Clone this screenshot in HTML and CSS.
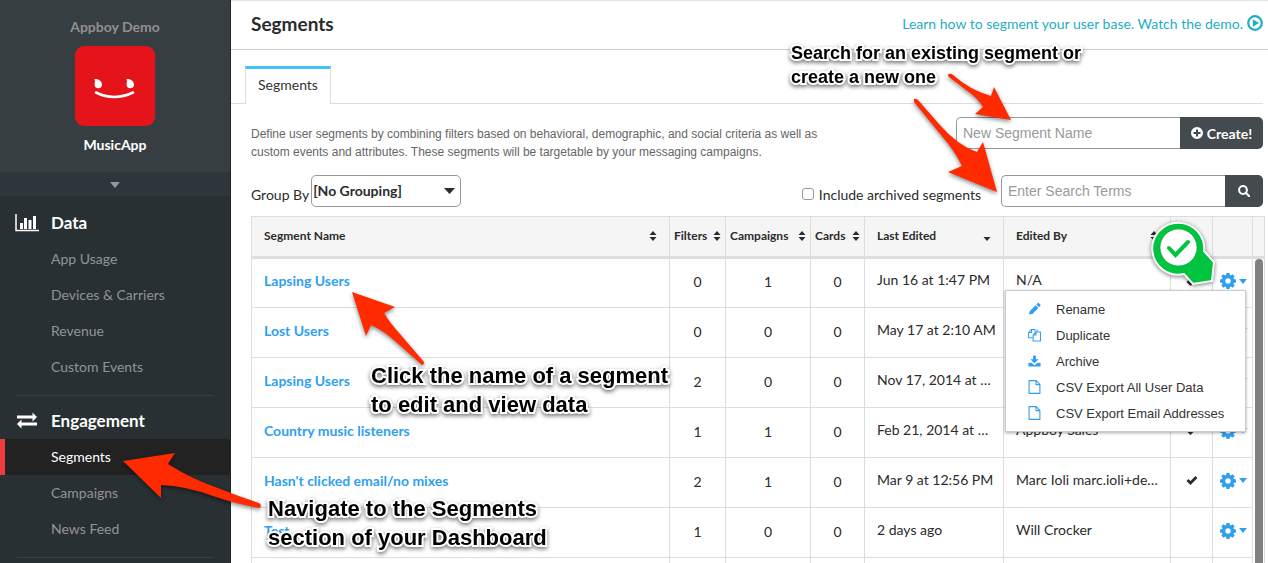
FILE: index.html
```html
<!DOCTYPE html>
<html lang="en">
<head>
<meta charset="utf-8">
<title>Segments</title>
<link rel="stylesheet" href="styles.css">
</head>
<body>
<svg class="defs" aria-hidden="true">
  <symbol id="gear" viewBox="0 0 16 16"><path fill-rule="evenodd" d="M6.500 0h3l.4 2 .9.400 1.800-1.200 2.100 2.100-1.200 1.800.4.900 2.100.4v3.100l-2.100.4-.4.900 1.200 1.800-2.100 2.100-1.800-1.200-.9.400-.4 2.100h-3l-.4-2.100-.9-.4-1.800 1.200-2.100-2.100 1.200-1.800-.4-.9L0 9.500V6.400L2.100 6l.4-.9-1.200-1.800 2.100-2.100 1.800 1.200.9-.4zM8 5.300a2.700 2.700 0 1 0 0 5.400 2.700 2.700 0 0 0 0-5.400z"/></symbol>
  <symbol id="caret" viewBox="0 0 8 5"><path d="M0 0h8L4 5z"/></symbol>
  <symbol id="sort" viewBox="0 0 8 10"><path d="M4 0l3.500 4h-7zM4 10l3.500-4h-7z"/></symbol>
  <symbol id="tick" viewBox="0 0 12 10"><path d="M1.500 5l3 3 6-6" fill="none" stroke="currentColor" stroke-width="2.800"/></symbol>
  <symbol id="file" viewBox="0 0 12 14"><path d="M.6.600h7l3.800 3.800v9H.6zM7.500.600v4h4" fill="none" stroke="currentColor" stroke-width="1.100"/></symbol>
</svg>
<div class="app">
  <aside class="sidebar">
    <div class="account">
      <span class="company">Appboy Demo</span>
      <svg class="logo" viewBox="0 0 80 80" aria-hidden="true">
        <rect width="80" height="80" rx="9" fill="#e5141b"/>
        <path d="M19.500 33c4-.5 7.500 2 7.500 5.500a3.700 3.800 0 0 1-7.400 0c0-2 .9-3-.1-5.500zM51.500 33c4-.5 7.500 2 7.500 5.500a3.700 3.800 0 0 1-7.400 0c0-2 .9-3-.1-5.500z" fill="#fff"/>
        <path d="M21 46.500q18 9 37 0" fill="none" stroke="#fff" stroke-width="2.600" stroke-linecap="round"/>
      </svg>
      <span class="app-name">MusicApp</span>
    </div>
    <button class="switcher" aria-label="Switch app"><svg viewBox="0 0 10 6"><path d="M0 0h10L5 6z"/></svg></button>
    <nav>
      <section class="group">
        <h2><svg class="group-icon" viewBox="0 0 24 18"><path d="M1 0v16.500h23" fill="none" stroke="#fff" stroke-width="1.500"/><path d="M5 9h3v6H5zM9 4h3v11H9zM13.500 6h3v9h-3zM18 2h3v13h-3z" fill="#fff"/></svg>Data</h2>
        <a href="#">App Usage</a>
        <a href="#">Devices &amp; Carriers</a>
        <a href="#">Revenue</a>
        <a href="#">Custom Events</a>
      </section>
      <section class="group">
        <h2><svg class="group-icon" viewBox="0 0 24 18"><path d="M2 5h16M6 12h16" stroke="#fff" stroke-width="2.800"/><path d="M17.500 .5L22 5l-4.500 4.500zM6.500 7.500L2 12l4.500 4.500z" fill="#fff"/></svg>Engagement</h2>
        <a href="#" class="active">Segments</a>
        <a href="#">Campaigns</a>
        <a href="#">News Feed</a>
      </section>
      <section class="group"></section>
    </nav>
  </aside>

  <main class="main">
    <header class="page-head">
      <h1>Segments</h1>
      <a class="demo" href="#">Learn how to segment your user base. Watch the demo.
        <svg viewBox="0 0 16 16"><circle cx="8" cy="8" r="6.800" fill="none" stroke="currentColor" stroke-width="2.200"/><path d="M5.800 4.200v7.600L12 8z" fill="currentColor"/></svg></a>
    </header>
    <div class="tabs"><a class="tab" href="#">Segments</a></div>

    <div class="content">
      <div class="intro">
        <p>Define user segments by combining filters based on behavioral, demographic, and social criteria as well as custom events and attributes. These segments will be targetable by your messaging campaigns.</p>
        <form class="combo">
          <input type="text" placeholder="New Segment Name" aria-label="New Segment Name">
          <button type="button" class="create"><svg viewBox="0 0 12 12"><path fill-rule="evenodd" d="M6 0a6 6 0 1 1 0 12A6 6 0 0 1 6 0zM5 2.500V5H2.500v2H5v2.500h2V7h2.500V5H7V2.500z"/></svg>Create!</button>
        </form>
      </div>
      <div class="tools">
        <label for="grouping">Group By</label>
        <span class="select">
          <select id="grouping"><option>[No Grouping]</option></select>
          <svg viewBox="0 0 11 6"><path d="M0 0h11L5.500 6z"/></svg>
        </span>
        <span class="archived"><input type="checkbox" id="archived"><label for="archived">Include archived segments</label></span>
        <form class="combo">
          <input type="text" placeholder="Enter Search Terms" aria-label="Enter Search Terms">
          <button type="button" class="find" aria-label="Search"><svg viewBox="0 0 12 12"><circle cx="5" cy="5" r="3.900" fill="none" stroke="#fff" stroke-width="2"/><path d="M8 8l3.200 3.200" stroke="#fff" stroke-width="2.200" stroke-linecap="round"/></svg></button>
        </form>
      </div>

      <div class="grid">
        <table>
          <colgroup><col><col class="c-filters"><col class="c-campaigns"><col class="c-cards"><col class="c-date"><col class="c-by"><col class="c-tick"><col class="c-act"></colgroup>
          <thead>
            <tr>
              <th class="wide"><div>Segment Name<svg class="sort"><use href="#sort"/></svg></div></th>
              <th><div>Filters<svg class="sort"><use href="#sort"/></svg></div></th>
              <th><div>Campaigns<svg class="sort"><use href="#sort"/></svg></div></th>
              <th><div>Cards<svg class="sort"><use href="#sort"/></svg></div></th>
              <th class="wide"><div>Last Edited<svg class="sort-down" viewBox="0 0 8 10"><path d="M.5 6h7L4 10z"/></svg></div></th>
              <th class="wide"><div>Edited By<svg class="sort"><use href="#sort"/></svg></div></th>
              <th></th>
              <th></th>
            </tr>
          </thead>
          <tbody>
            <tr><td class="name"><a href="#">Lapsing Users</a></td><td class="num">0</td><td class="num">1</td><td class="num">0</td><td>Jun 16 at 1:47 PM</td><td>N/A</td><td class="mark"><svg><use href="#tick"/></svg></td>
              <td class="act"><button aria-label="Actions"><svg class="gear"><use href="#gear"/></svg><svg class="caret"><use href="#caret"/></svg></button>
                <div class="menu">
                  <button><svg viewBox="0 0 14 14"><path d="M1 13l.8-3.600 6.400-6.400 2.900 2.900-6.400 6.400zM9 2.200L10.600.600q.6-.4 1.100 0l1.700 1.700q.5.600 0 1.100L11.900 5z" fill="currentColor"/></svg>Rename</button>
                  <button><svg viewBox="0 0 14 14"><path d="M5.500 10H.6V4.200L3.700 1h3.800v2.500M3.800 1v3.300H.6M5.500 13.400V7L8.500 3.700h4.900v9.700zM8.600 3.700V7H5.500M9.800 1v2.500" fill="none" stroke="currentColor" stroke-width="1.100"/></svg>Duplicate</button>
                  <button><svg viewBox="0 0 14 14"><path d="M5.500 1h3v4h3L7 9.300 2.500 5h3zM.5 9h3.200L7 11.500 10.300 9h3.200v4H.5z" fill="currentColor"/></svg>Archive</button>
                  <button><svg><use href="#file"/></svg>CSV Export All User Data</button>
                  <button><svg><use href="#file"/></svg>CSV Export Email Addresses</button>
                </div></td></tr>
            <tr><td class="name"><a href="#">Lost Users</a></td><td class="num">0</td><td class="num">0</td><td class="num">0</td><td>May 17 at 2:10 AM</td><td></td><td></td><td class="act"><button aria-label="Actions"><svg class="gear"><use href="#gear"/></svg><svg class="caret"><use href="#caret"/></svg></button></td></tr>
            <tr><td class="name"><a href="#">Lapsing Users</a></td><td class="num">2</td><td class="num">0</td><td class="num">0</td><td>Nov 17, 2014 at …</td><td></td><td></td><td class="act"><button aria-label="Actions"><svg class="gear"><use href="#gear"/></svg><svg class="caret"><use href="#caret"/></svg></button></td></tr>
            <tr><td class="name"><a href="#">Country music listeners</a></td><td class="num">1</td><td class="num">1</td><td class="num">0</td><td>Feb 21, 2014 at …</td><td>Appboy Sales</td><td class="mark"><svg><use href="#tick"/></svg></td><td class="act"><button aria-label="Actions"><svg class="gear"><use href="#gear"/></svg><svg class="caret"><use href="#caret"/></svg></button></td></tr>
            <tr><td class="name"><a href="#">Hasn't clicked email/no mixes</a></td><td class="num">2</td><td class="num">1</td><td class="num">0</td><td>Mar 9 at 12:56 PM</td><td>Marc Ioli marc.ioli+de…</td><td class="mark"><svg><use href="#tick"/></svg></td><td class="act"><button aria-label="Actions"><svg class="gear"><use href="#gear"/></svg><svg class="caret"><use href="#caret"/></svg></button></td></tr>
            <tr><td class="name"><a href="#">Test</a></td><td class="num">1</td><td class="num">0</td><td class="num">0</td><td>2 days ago</td><td>Will Crocker</td><td></td><td class="act"><button aria-label="Actions"><svg class="gear"><use href="#gear"/></svg><svg class="caret"><use href="#caret"/></svg></button></td></tr>
            <tr><td></td><td></td><td></td><td></td><td></td><td></td><td></td><td></td></tr>
          </tbody>
        </table>
        <div class="gutter"><div class="gutter-head"></div><div class="thumb"></div></div>
      </div>
    </div>
  </main>
</div>

<div class="notes">
  <svg class="arrows" viewBox="0 0 1268 563">
    <g fill="#ff2a00">
      <path d="M123 461L175 453L168 464Q190 478 215 487Q238 496 259 503Q262 505 260 508Q236 504 213 496Q186 486 161 485L161 498Z"/>
      <path d="M352 292L395 307L384 313Q390 323 400 334L424 362Q424 365 422 365L395 341Q384 331 371 325L366 336Z"/>
      <path d="M949 74Q951 73 953 75Q970 90 991 96L994 87L1011 120L975 114L983 107Q978 98 966 90L949 77Q947 75 949 74Z"/>
      <path d="M914 99Q916 98 918 100L939 124Q957 145 977 152L983 142L997 192L948 172L962 166Q955 151 941 135L914 102Z"/>
    </g>
    <path class="pin-edge" d="M1204 251L1214 262L1212 281L1193 284L1184 274A26 26 0 1 1 1204 252Z"/>
    <circle cx="1178.500" cy="247.500" r="18.500" fill="#fff" stroke="#009c34" stroke-width=".6"/>
    <path d="M1169 248l6.500 7 12.500-13" fill="none" stroke="#00c440" stroke-width="4" stroke-linecap="round"/>
  </svg>
  <p class="note note-search">Search for an existing segment or<br>create a new one</p>
  <p class="note note-name">Click the name of a segment<br>to edit and view data</p>
  <p class="note note-nav">Navigate to the Segments<br>section of your Dashboard</p>
</div>
</body>
</html>
```
FILE: styles.css
```css
* { box-sizing: border-box; }
body { margin: 0; height: 100vh; overflow: hidden; position: relative; background: #fff; color: #2b2b2b; font-family: Lato, sans-serif; font-size: 14px; }
a { text-decoration: none; color: inherit; }
h1, h2, p { margin: 0; }
button, input, select { font-family: inherit; font-size: inherit; margin: 0; }
button { border: 0; padding: 0; background: none; color: inherit; }
svg { fill: currentColor; display: block; }
.defs { position: absolute; width: 0; height: 0; }
.app { display: flex; height: 100vh; overflow: hidden; }

.sidebar { flex: 0 0 231px; background: #293033; border-right: 1px solid #22272a; color: #919495; }
.account { display: flex; flex-direction: column; align-items: center; height: 172px; padding-top: 18px; background: #373e42; line-height: 18px; }
.company { font-weight: 700; color: #8e9090; }
.logo { width: 80px; height: 80px; margin: 10px 0; }
.app-name { font-weight: 700; color: #fff; }
.switcher { display: flex; width: 100%; height: 26px; padding-top: 2px; align-items: center; justify-content: center; background: #2e363b; border-bottom: 2px solid #293033; color: #969899; }
.switcher svg { width: 10px; height: 6px; }
.group { padding-bottom: 10px; }
.group + .group::before { content: ""; display: block; height: 1px; margin: 0 17px; background: #3a4144; }
.group h2 { display: flex; align-items: center; gap: 12px; height: 43px; padding: 6px 0 0 15px; font-size: 17px; color: #fff; }
.group-icon { width: 24px; height: 18px; }
.group a { display: block; height: 36px; line-height: 36px; padding-left: 51px; }
.group a.active { background: #222; color: #fff; border-left: 5px solid #ef3b3b; padding-left: 46px; }

.main { flex: 1; min-width: 0; border-top: 1px solid #e3e3e3; }
.page-head { display: flex; align-items: center; justify-content: space-between; height: 49px; padding: 0 5px 4px 20px; border-bottom: 1px solid #ccc; }
h1 { font-size: 19px; }
.demo { display: flex; align-items: center; gap: 4px; color: #1fadc5; }
.demo svg { width: 16px; height: 16px; }
.tabs { display: flex; height: 54px; margin-right: 5px; padding-left: 14px; align-items: flex-end; border-bottom: 1px solid #ddd; }
.tab { height: 38px; margin-bottom: -1px; padding: 0 12px; line-height: 32px; border: 1px solid #ddd; border-top: 3px solid #42c0fb; border-bottom: 0; background: #fff; color: #333; }

.content { padding: 13px 5px 0 20px; }
.intro { display: flex; height: 44px; justify-content: space-between; align-items: flex-start; }
.intro p { width: 590px; padding-top: 8px; font: 12px/18px "Liberation Sans", Arial, sans-serif; color: #666; }
.combo { display: flex; height: 32px; }
.combo input { width: 224px; padding: 0 6px; border: 1px solid #999; border-right: 0; border-radius: 5px 0 0 5px; font: 14px "Liberation Sans", Arial, sans-serif; background: #fff; }
.combo input::placeholder { color: #999; opacity: 1; }
.combo button { display: flex; align-items: center; justify-content: center; gap: 4px; background: #434b4f; color: #fff; font-weight: 700; border-radius: 0 5px 5px 0; }
.combo svg { width: 12px; height: 12px; }
.create { width: 83px; }
.find { width: 38px; }
.tools { display: flex; align-items: center; margin: 14px 0 9px; }
.tools > label, .archived { padding-top: 6px; }
.select { position: relative; margin-left: 2px; }
.select select { display: block; width: 150px; height: 32px; padding: 0 0 2px 1px; border: 1px solid #999; border-radius: 5px; background: #fff; color: #2b2b2b; font-weight: 700; appearance: none; }
.select svg { position: absolute; right: 6px; top: 13px; width: 11px; height: 6px; pointer-events: none; }
.archived { display: flex; align-items: center; gap: 5px; margin: 0 20px 0 auto; }
.archived input { appearance: none; width: 12px; height: 12px; border: 1px solid #999; border-radius: 3px; background: #fff; }

.grid { display: flex; margin-right: -2px; }
table { flex: 1; width: 0; table-layout: fixed; border-collapse: collapse; }
.c-filters { width: 56px; }
.c-campaigns { width: 85px; }
.c-cards { width: 54px; }
.c-date { width: 139px; }
.c-by { width: 167px; }
.c-tick { width: 42px; }
.c-act { width: 40px; }
th, td { border: 1px solid #ddd; text-align: left; white-space: nowrap; }
th { height: 41px; padding: 0 4px; background: #f5f5f5; border-bottom: 3px solid #ddd; font-size: 12px; }
th div { display: flex; align-items: center; justify-content: space-between; padding-bottom: 2px; }
th.wide { padding: 0 12px; }
.sort, .sort-down { width: 8px; height: 10px; }
td { height: 50px; padding: 0 12px 7px; }
td.name { padding-bottom: 5px; }
td > a { color: #2f9ff0; font-weight: 700; }
td.num { padding: 0 0 3px; text-align: center; }
td.mark svg { width: 12px; height: 10px; margin: auto; }
td.mark { padding: 0 0 5px; }
td.act { padding: 0 0 4px 7px; position: relative; color: #2f9ff0; }
.act > button { display: flex; align-items: center; gap: 3px; }
.gear { width: 16px; height: 16px; }
.caret { width: 8px; height: 5px; }
.menu { position: absolute; z-index: 2; top: 31px; right: 6px; width: 241px; padding: 5px 0; background: #fff; border: 1px solid #ccc; box-shadow: 0 1px 3px #0005; }
.menu button { display: flex; align-items: center; gap: 15px; width: 100%; height: 26px; padding-left: 22px; color: #333; font: 13px "Liberation Sans", Arial, sans-serif; }
.menu svg { width: 13px; height: 14px; color: #2f9ff0; }
.gutter { flex: 0 0 12px; border: 1px solid #ddd; border-left: 0; }
.gutter-head { height: 42px; background: #f5f5f5; border-bottom: 3px solid #ddd; }
.thumb { width: 8px; height: calc(100% - 42px); margin-left: 2px; background: #808080; border-radius: 4px; }

.notes { position: absolute; inset: 0; z-index: 5; pointer-events: none; overflow: hidden; }
.arrows { position: absolute; left: 0; top: 0; width: 1268px; height: 563px; }
.arrows g { filter: drop-shadow(0 2px 2px #0007); }
.pin-edge { fill: #00c440; stroke: #fff; stroke-width: 2px; filter: drop-shadow(0 1px 2px #0008); }
.note { position: absolute; white-space: nowrap; color: #000; font-family: "Liberation Sans", Arial, sans-serif; font-weight: 700; font-size: 22px; line-height: 29px; paint-order: stroke; -webkit-text-stroke: 4px #fff; filter: drop-shadow(0 2px 2px #0008); }
.note-search { left: 791px; top: 41px; font-size: 18px; line-height: 24px; }
.note-name { left: 371px; top: 361px; }
.note-nav { left: 268px; top: 494px; }
```
